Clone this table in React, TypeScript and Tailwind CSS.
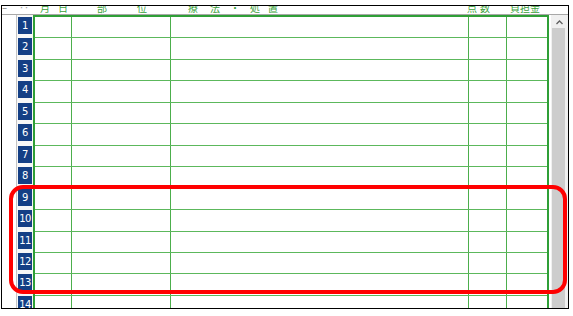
const ROWS = Array.from({ length: 14 }, (_, i) => i + 1);

const jp = { fontFamily: '"Noto Sans CJK JP", "Noto Sans", sans-serif' };

function HeaderLabels() {
  return (
    <div className="h-[8px] overflow-hidden">
      <div
        className="mt-[-3px] flex text-[10px] leading-[10px] whitespace-nowrap text-[#3a9f3a]"
        style={jp}
      >
        <span className="w-[17px] text-[#9a9a9a]">ｰ</span>
        <span className="w-[21px] text-[#9a9a9a]">‥</span>
        <span className="w-[18px]">月</span>
        <span className="w-[39px]">日</span>
        <span className="w-[40px]">部</span>
        <span className="w-[51px]">位</span>
        <span className="w-[22px]">療</span>
        <span className="w-[20px]">法</span>
        <span className="w-[20px]">・</span>
        <span className="w-[18px]">処</span>
        <span className="w-[199px]">置</span>
        <span className="w-[13px]">点</span>
        <span className="w-[30px]">数</span>
        <span>負担金</span>
      </div>
    </div>
  );
}

function Gutter() {
  return (
    <div className="w-[17px] border-l border-[#c4c4c4] bg-[#f7f7f7] pt-[2px]">
      {ROWS.map((n) => (
        <div key={n} className="h-[21.46px]">
          <div
            className="ml-[1px] flex h-[17px] w-[14px] items-center justify-center bg-[#143f85] text-[10px] text-white"
            style={{ fontFamily: '"DejaVu Sans", sans-serif', letterSpacing: "-0.5px" }}
          >
            {n}
          </div>
        </div>
      ))}
    </div>
  );
}

function Grid() {
  return (
    <div className="w-[516px] border-x-2 border-t-2 border-[#2f9f37]">
      {ROWS.map((n) => (
        <div key={n} className="flex h-[21.46px] border-b border-[#5cb85c]">
          <div className="w-[37px] border-r border-[#4cae4c]" />
          <div className="w-[99px] border-r border-[#4cae4c]" />
          <div className="w-[298px] border-r border-[#4cae4c]" />
          <div className="w-[38px] border-r border-[#4cae4c]" />
          <div className="flex-1" />
        </div>
      ))}
    </div>
  );
}

function Scrollbar() {
  return (
    <div className="flex w-[17px] flex-col bg-[#f0f0f0] pt-[1px]">
      <div className="flex h-[12px] items-center justify-center">
        <svg width="7" height="5" viewBox="0 0 7 5">
          <path d="M0.5 4 L3.5 1 L6.5 4" fill="none" stroke="#606060" strokeWidth="1.3" />
        </svg>
      </div>
      <div className="ml-[1px] w-[13px] flex-1 bg-[#cdcdcd]" />
    </div>
  );
}

export default function App() {
  return (
    <div className="relative h-[316px] w-[573px] overflow-hidden bg-white">
      <div className="ml-[1px] mt-[5px] flex h-[304px] w-[568px] flex-col border border-black">
        <HeaderLabels />
        <div className="h-[1px] bg-[#a8a8a8]" />
        <div className="flex flex-1 overflow-hidden">
          <div className="w-[14px]" />
          <Gutter />
          <Grid />
          <div className="w-[2px]" />
          <Scrollbar />
        </div>
      </div>
      <div className="absolute left-[9px] top-[185px] h-[109px] w-[558px] rounded-[14px] border-[4px] border-[#ff0000]" />
    </div>
  );
}
